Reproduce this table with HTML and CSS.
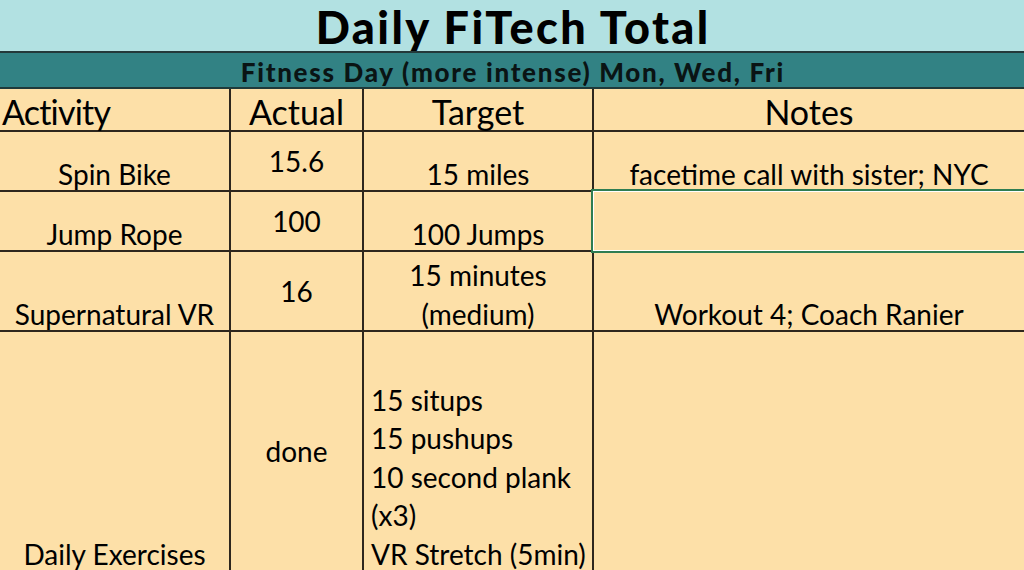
FILE: index.html
```html
<!DOCTYPE html>
<html>
<head>
<meta charset="utf-8">
<link rel="stylesheet" href="styles.css">
</head>
<body>
<div class="sheet">
  <div class="title"><span class="t">Daily FiTech Total</span></div>
  <div class="subtitle"><span class="t">Fitness Day (more intense) Mon, Wed, Fri</span></div>
  <div class="grid">
    <div class="cell head left"><div class="t">Activity</div></div>
    <div class="cell head"><div class="t">Actual</div></div>
    <div class="cell head"><div class="t">Target</div></div>
    <div class="cell head last"><div class="t">Notes</div></div>

    <div class="cell"><div class="t">Spin Bike</div></div>
    <div class="cell mid"><div class="t">15.6</div></div>
    <div class="cell"><div class="t">15 miles</div></div>
    <div class="cell last"><div class="t">facetime call with sister; NYC</div></div>

    <div class="cell"><div class="t">Jump Rope</div></div>
    <div class="cell mid"><div class="t">100</div></div>
    <div class="cell"><div class="t">100 Jumps</div></div>
    <div class="cell last selected"></div>

    <div class="cell"><div class="t">Supernatural VR</div></div>
    <div class="cell mid"><div class="t">16</div></div>
    <div class="cell"><div class="t">15 minutes<br>(medium)</div></div>
    <div class="cell last"><div class="t">Workout 4; Coach Ranier</div></div>

    <div class="cell"><div class="t">Daily Exercises</div></div>
    <div class="cell mid"><div class="t">done</div></div>
    <div class="cell list"><div class="t">15 situps<br>15 pushups<br>10 second plank<br>(x3)<br>VR Stretch (5min)</div></div>
    <div class="cell last"></div>
  </div>
</div>
</body>
</html>
```

FILE: styles.css
```css
html, body {
  margin: 0;
  padding: 0;
  overflow: hidden;
  background: #fde0a8;
}
.sheet {
  width: 1024px;
  font-family: "Lato", "Liberation Sans", sans-serif;
  color: #000;
}
.title {
  height: 51px;
  background: #b2e1e2;
  border-bottom: 2px solid #23393a;
  display: flex;
  justify-content: center;
  align-items: flex-end;
  font-weight: 900;
  font-size: 45px;
  line-height: 52px;
  letter-spacing: 2.4px;
  overflow: hidden;
}
.title .t {
  margin-bottom: -2px;
  margin-right: -2.4px;
}
.subtitle {
  height: 34px;
  background: #328284;
  border-bottom: 2px solid #1f3a3a;
  display: flex;
  justify-content: center;
  align-items: flex-end;
  font-weight: 900;
  font-size: 26px;
  line-height: 34px;
  letter-spacing: 1.7px;
  color: #0a1414;
  overflow: hidden;
}
.subtitle .t {
  margin-bottom: -2px;
  margin-right: -1.7px;
}
.grid {
  display: grid;
  grid-template-columns: 231px 133px 230px 1fr;
  grid-template-rows: 43px 60px 60px 80px 240px;
  background: #fde0a8;
}
.cell {
  box-sizing: border-box;
  border-right: 2px solid #2e271d;
  border-bottom: 2px solid #2e271d;
  display: flex;
  flex-direction: column;
  justify-content: flex-end;
  align-items: center;
  text-align: center;
  font-size: 28px;
  line-height: 38.5px;
  white-space: nowrap;
}
.cell .t {
  margin-bottom: -3px;
}
.cell.last {
  border-right: none;
}
.cell.head {
  font-size: 34px;
  line-height: 41px;
}
.cell.head .t {
  margin-bottom: -2px;
}
.cell.left {
  align-items: flex-start;
  padding-left: 2px;
}
.cell.left .t {
  letter-spacing: -0.8px;
}
.cell.mid {
  justify-content: center;
}
.cell.mid .t {
  margin-bottom: 0;
}
.cell.list {
  align-items: flex-start;
  text-align: left;
  padding-left: 7px;
}
.cell.selected {
  position: relative;
}
.cell.selected::after {
  content: "";
  position: absolute;
  left: -3px;
  top: -3px;
  right: -4px;
  bottom: -3px;
  border: 2px solid #2f7d52;
  box-shadow: inset 0 0 0 1px #ffffff;
}
```
